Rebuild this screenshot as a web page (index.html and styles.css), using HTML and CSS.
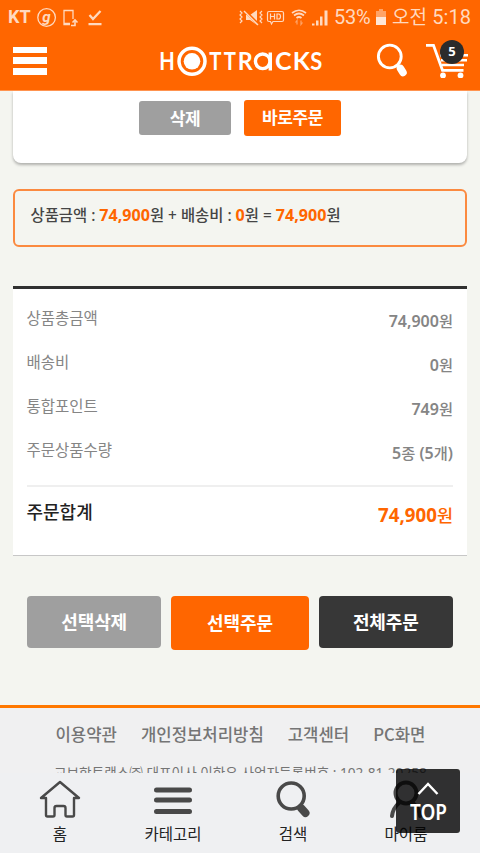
FILE: index.html
```html
<!DOCTYPE html>
<html lang="ko">
<head>
<meta charset="utf-8">
<title>HOTTRACKS</title>
<link rel="stylesheet" href="styles.css">
</head>
<body>
<div class="screen">
  <div class="status">
    <span class="carrier">KT</span>
    <svg class="status-left" width="72" height="24" viewBox="36 4 72 24" fill="none" stroke="#ffd9bf" stroke-width="1.3">
      <circle cx="46.600" cy="16.500" r="8.800"/>
      <text class="g-mark" x="42.300" y="20.500">g</text>
      <path d="M70 23.500H64V9.500H73V18M64 22.500h6"/><path d="M71 24.500h4v-4M72.500 21.500l2.500-2.500 2.500 2.500" stroke-width="1.600"/>
      <path d="M89.500 14l3.500 4 7.500-8M88.500 23.200h13" stroke-width="2.300"/>
    </svg>
    <svg class="status-right" width="92" height="24" viewBox="238 4 92 24" fill="none" stroke="#ffd9bf" stroke-width="1.200">
      <path d="M240 10l2 2-2 2 2 2-2 2 2 2-2 2M262 10l-2 2 2 2-2 2 2 2-2 2 2 2"/>
      <path d="M246 14h4l7-5v15l-7-5h-4z" fill="#ffd9bf" stroke="none"/>
      <path d="M244 9l15 15" stroke="#ff6600" stroke-width="3"/><path d="M244 10l14 14" stroke-width="1.500"/>
      <path d="M269 10.500h13q1.500 0 1.500 1.500v7q0 1.500-1.500 1.500h-9l-1.500 2.500-1-2.500h-1.500q-1.500 0-1.500-1.500v-7q0-1.500 1.500-1.500z"/>
      <path d="M270.500 12.500v6M274.500 12.500v6M270.500 15.500h4M277 13v5h1.500q2 0 2-2.500t-2-2.500z"/>
      <path d="M292 12q7-5.500 14 0M294 14.500q5-4 10 0M296.500 17q2.500-2 5 0" stroke-width="1.700"/>
      <path d="M297 23.500v-4l-1.500 2M301 19.500v4l1.500-2" opacity=".55"/>
      <path d="M312 24.500v-2h2.500v2zM316 24.500v-5h2.500v5zM320 24.500v-9h2.500v9zM324.500 24.500V9.500h3v15z" fill="#ffd9bf" stroke="none"/>
    </svg>
    <span class="percent">53%</span>
    <svg class="battery" width="12" height="16" viewBox="0 0 12 16"><path d="M1 2h3V0h4v2h3v6H1z" fill="#ffa366"/><path d="M1 8h10v8H1z" fill="#ffe6d6"/></svg>
    <span class="clock"><span class="ampm">오전</span> 5:18</span>
  </div>
  <header class="header">
    <div class="burger"><i></i><i></i><i></i></div>
    <svg class="logo" width="164" height="34" viewBox="160 44 164 34">
      <text x="159.200" y="70.300" textLength="15.500" lengthAdjust="spacingAndGlyphs">H</text>
      <text x="209.200" y="70.300" textLength="12.200" lengthAdjust="spacingAndGlyphs">T</text>
      <text x="223.700" y="70.300" textLength="12.200" lengthAdjust="spacingAndGlyphs">T</text>
      <text x="237.800" y="70.300" textLength="15" lengthAdjust="spacingAndGlyphs">R</text>
      <text x="275" y="70.300">C</text>
      <text x="292.800" y="70.300">K</text>
      <text x="310.200" y="70.300" textLength="12" lengthAdjust="spacingAndGlyphs">S</text>
      <g fill="none" stroke="#fff" stroke-width="3.400"><circle cx="262.700" cy="61.300" r="7.300"/><path d="M270.300 52.500v18"/></g>
      <circle cx="192" cy="61.300" r="13" fill="none" stroke="#fff" stroke-width="3.500"/><circle cx="192" cy="61.300" r="8.300" fill="#fff"/>
    </svg>
    <svg class="tools" width="96" height="40" viewBox="374 38 96 40" fill="none" stroke="#fff">
      <circle cx="389.800" cy="56.500" r="11.400" stroke-width="2.900"/><path d="M397 65l1.500 1.500" stroke-width="3"/><path d="M400.500 68.500l2.500 4" stroke-width="7.500" stroke-linecap="round"/>
      <path d="M426 45.300h7.500l9 25h21" stroke-width="2.800"/><path d="M440 55.300h28M441 60.200h26M442 65h22" stroke-width="2.400"/>
      <circle cx="443" cy="75.500" r="2.900" fill="#fff" stroke="none"/><circle cx="460.500" cy="75.500" r="2.900" fill="#fff" stroke="none"/>
    </svg>
    <span class="badge">5</span>
  </header>
  <section class="item-card">
    <button class="btn small gray">삭제</button>
    <button class="btn small orange">바로주문</button>
  </section>
  <section class="sum-box">상품금액 : <b>74,900</b>원 + 배송비 : <b>0</b>원 = <b>74,900</b>원</section>
  <section class="summary">
    <dl class="row"><dt>상품총금액</dt><dd>74,900<i>원</i></dd></dl>
    <dl class="row"><dt>배송비</dt><dd>0<i>원</i></dd></dl>
    <dl class="row"><dt>통합포인트</dt><dd>749<i>원</i></dd></dl>
    <dl class="row"><dt>주문상품수량</dt><dd>5<i>종</i> (5<i>개</i>)</dd></dl>
    <dl class="row total"><dt>주문합계</dt><dd>74,900<i>원</i></dd></dl>
  </section>
  <div class="actions">
    <button class="btn gray">선택삭제</button>
    <button class="btn orange">선택주문</button>
    <button class="btn dark">전체주문</button>
  </div>
  <footer class="footer">
    <div class="links"><span>이용약관</span><span>개인정보처리방침</span><span>고객센터</span><span>PC화면</span></div>
    <p class="company">교보핫트랙스㈜ 대표이사 이한우 사업자등록번호 : 102-81-20258</p>
  </footer>
  <nav class="tabbar">
    <div class="tab"><svg width="42" height="38" viewBox="0 0 42 38"><path d="M2 18L21 2l19 16h-5v17q0 1.500-1.500 1.500H28q-1.500 0-1.500-1.500v-7q0-2-2-2h-7q-2 0-2 2v7q0 1.500-1.500 1.500H8.500Q7 36.500 7 35V18z" fill="none" stroke="#494949" stroke-width="2.400" stroke-linejoin="round"/></svg><span>홈</span></div>
    <div class="tab"><svg width="40" height="38" viewBox="0 0 40 38"><path d="M3.500 10h33M3.500 20h33M3.500 31.500h33" stroke="#494949" stroke-width="5" stroke-linecap="round"/></svg><span>카테고리</span></div>
    <div class="tab"><svg width="40" height="38" viewBox="0 0 40 38" fill="none" stroke="#494949"><circle cx="18.200" cy="16" r="13" stroke-width="3.600"/><path d="M28 28l4.500 5" stroke-width="8" stroke-linecap="round"/></svg><span>검색</span></div>
    <div class="tab"><svg width="40" height="38" viewBox="0 0 40 38" fill="none" stroke="#494949" stroke-width="4"><circle cx="20" cy="13" r="10.500"/><path d="M6 36Q7 28 13 23M34 36Q33 28 27 23" stroke-linecap="round"/></svg><span>마이룸</span></div>
  </nav>
  <div class="top"><svg width="22" height="13" viewBox="0 0 22 13"><path d="M1.500 12L11 2l9.500 10" fill="none" stroke="#fff" stroke-width="2.400"/></svg><span>TOP</span></div>
</div>
</body>
</html>
```
FILE: styles.css
```css
* { box-sizing: border-box; margin: 0; padding: 0; }
body { background: #f4f5f0; font-family: "Noto Sans", "Noto Sans CJK KR", sans-serif; }
i { font-style: normal; }
svg { flex: none; }
.screen { position: relative; width: 480px; height: 853px; overflow: hidden; }
.status { display: flex; align-items: center; height: 34px; padding-left: 8px; background: #ff6600; color: #ffd9bf; font-family: Roboto, "Noto Sans CJK KR", sans-serif; white-space: nowrap; }
.carrier { flex: none; width: 28px; font-size: 18px; font-weight: 700; line-height: 20px; }
.g-mark { font: italic 700 15px Roboto, sans-serif; fill: #ffd9bf; stroke: none; }
.status-right { margin-left: 130px; }
.percent { flex: none; width: 40px; margin-left: 4px; font-size: 20px; letter-spacing: -.2px; }
.battery { margin: 0 5px 0 1px; }
.clock { font-size: 20px; letter-spacing: .1px; line-height: 24px; }
.ampm { font-size: 19px; }
.header { position: relative; display: flex; height: 57px; padding-left: 13px; background: #ff6600; border-bottom: 1px solid #ff9450; }
.burger { display: flex; flex-direction: column; gap: 4px; width: 34px; margin-top: 12.500px; }
.burger i { height: 6.700px; background: #fff; }
.logo { margin: 10px 0 0 113px; }
.logo text { font: 700 25px Lato, sans-serif; fill: #fff; }
.tools { margin: 4px 0 0 50px; }
.badge { position: absolute; left: 440px; top: 6px; width: 24px; height: 24px; border-radius: 50%; background: #2b2b2b; color: #fff; font-size: 13px; font-weight: 700; line-height: 23px; text-align: center; }
.item-card { display: flex; justify-content: center; align-items: flex-start; gap: 13px; height: 72px; margin: 0 13px; padding-top: 9px; background: #fff; border-radius: 0 0 8px 8px; box-shadow: 0 2px 3px rgba(0,0,0,.28); }
.btn { border: 0; border-radius: 4px; color: #fff; font: 700 18px/50px "Noto Sans CJK KR", sans-serif; letter-spacing: -.1px; height: 52px; width: 134.500px; padding-bottom: 4px; }
.gray { background: #9f9f9f; }
.orange { background: #ff6600; }
.dark { background: #373737; }
.small { border-radius: 3px; font-size: 17px; letter-spacing: -.4px; line-height: 32px; padding-bottom: 2px; }
.small.gray { width: 92px; height: 34px; margin-top: 1px; line-height: 31px; }
.small.orange { width: 97px; height: 36px; }
.sum-box { height: 58px; margin: 26px 13px 0; padding: 12px 15.500px; border: 2px solid #fb8a40; border-radius: 6px; color: #454545; font: 500 15.400px/25px "Noto Sans", "Noto Sans CJK KR", sans-serif; white-space: nowrap; }
.sum-box b { color: #ff6600; font-size: 16.100px; }
.summary { height: 270px; margin: 39px 13px 0; padding-top: 11px; border-top: 3px solid #303030; border-bottom: 1px solid #c7c7c7; background: #fff; }
.row { display: flex; justify-content: space-between; height: 44px; margin: 0 14px 0 13.500px; color: #858585; font-size: 15.500px; line-height: 36px; }
.row dd { padding-top: 3px; font-size: 16px; font-weight: 600; }
.row dd i { font-size: 15.300px; font-weight: 500; }
.row.total { height: 66px; margin-top: 9px; padding-top: 7px; border-top: 2px solid #efefef; color: #222; line-height: 36px; }
.total dt { font-size: 18px; font-weight: 500; }
.total dd { color: #ff6600; font-size: 18.700px; font-weight: 700; }
.total dd i { font-size: 17.500px; }
.actions { display: flex; gap: 9.500px; margin: 40px 27px 0; height: 54px; }
.actions .orange { width: 138.500px; height: 54px; line-height: 52px; }
.footer { height: 148px; margin-top: 55px; border-top: 3px solid #ff7800; background: #f0f0f1; color: #757575; }
.links { display: flex; gap: 24px; padding: 13px 0 0 55.500px; font-family: "Noto Sans CJK KR", sans-serif; font-size: 16.700px; font-weight: 500; line-height: 27px; white-space: nowrap; }
.company { margin: 13px 0 0 54px; font-size: 13.650px; line-height: 24px; white-space: nowrap; }
.tabbar { position: absolute; left: 0; top: 773px; display: flex; width: 480px; height: 80px; padding-top: 7px; background: #eff0f2; color: #222; }
.tab { display: flex; flex: none; flex-direction: column; align-items: center; width: 120px; font-size: 15.500px; line-height: 28px; }
.tab span { padding-top: 2px; }
.tab:nth-child(2) { width: 106px; }
.tab:nth-child(3) { width: 134px; }
.tab:nth-child(4) { width: 92px; }
.top { position: absolute; left: 396px; top: 769px; display: flex; flex-direction: column; align-items: center; width: 64px; height: 64px; padding-top: 13px; border-radius: 3px; background: rgba(0,0,0,.8); color: #fff; font-size: 22px; font-weight: 600; line-height: 32px; }
.top span { transform: scaleX(.86); }
```
